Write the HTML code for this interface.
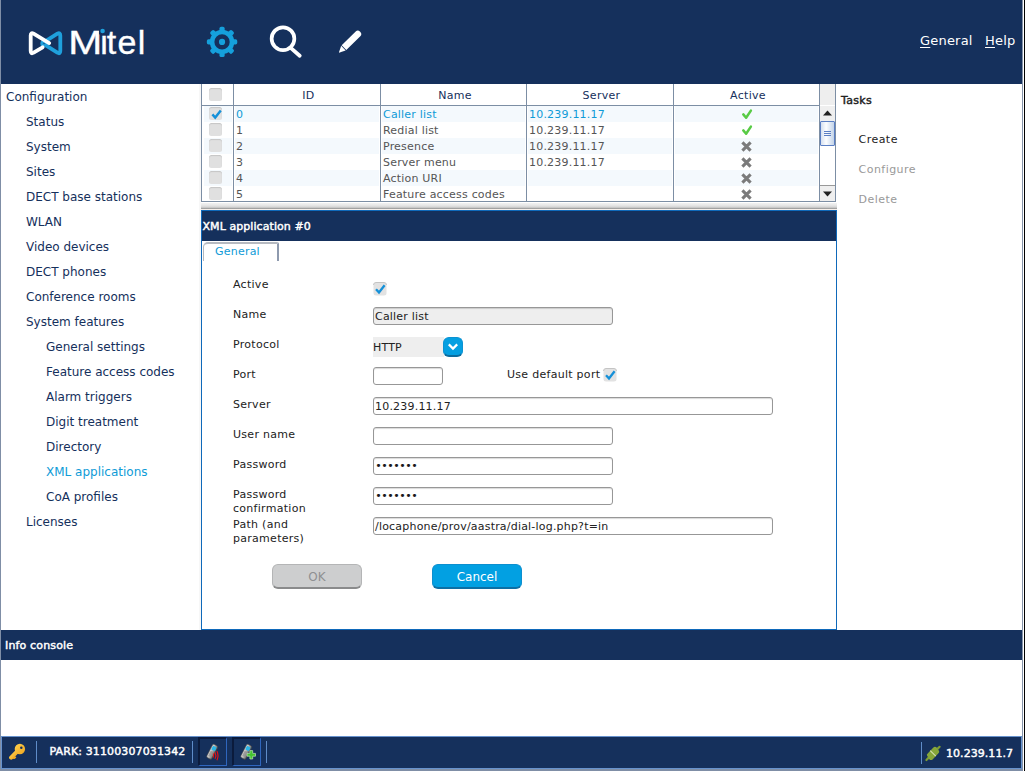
<!DOCTYPE html>
<html><head><meta charset="utf-8"><title>Mitel OMM</title>
<style>
*{box-sizing:border-box;margin:0;padding:0}
html,body{width:1025px;height:771px;overflow:hidden;background:#fff}
body{position:relative;font-family:"DejaVu Sans","Liberation Sans",sans-serif;font-size:11px;color:#15305c}
.abs{position:absolute}
.fb{-webkit-text-stroke:0.45px currentColor}
#hdr{left:1px;top:0;width:1021px;height:84px;background:#15305c}
#edgeL{left:0;top:0;width:1px;height:771px;background:#7f8ea6}
#edgeR{left:1022px;top:0;width:1px;height:771px;background:#8593a9}
#edgeR2{left:1024px;top:0;width:1px;height:771px;background:#000}
.nav{left:0;font-size:12px;white-space:nowrap;color:#15305c;line-height:14px;letter-spacing:0}
.menu{color:#fff;font-size:13px;top:33px;line-height:16px;letter-spacing:.2px}
.menu u{text-decoration-thickness:1px;text-underline-offset:1.5px}
/* table */
#tbl{left:201px;top:84px;width:635px;height:118px;border:1px solid #7c8ea4;border-top:none;background:#fff;overflow:hidden}
.th{top:0;height:22px;letter-spacing:.3px;padding-left:3px;border-right:1px solid #7c8ea4;border-bottom:1px solid #7c8ea4;text-align:center;line-height:23px;font-size:11px;color:#15305c}
.row{left:1px;width:617px;height:16px}
.row.odd .c{background:#f4f9fd}
.c{position:absolute;top:0;height:16px;line-height:18px;font-size:11px;color:#555;white-space:nowrap;letter-spacing:0.2px;padding-left:1px;overflow:hidden}
.sel .c{color:#0f9bd7}
.vl{position:absolute;top:22px;width:1px;height:96px;background:#7c8ea4}
.cb{position:absolute;width:13px;height:13px;border-radius:2.5px;background:#e0e0e0;box-shadow:inset 0 1px 1px rgba(0,0,0,.12)}
/* form */
#tab{left:1px;top:31px;width:76px;height:19px;border:1px solid #b3b8bf;border-top:2px solid #b6bac1;border-right:2px solid #8e9aae;border-bottom:none;border-radius:5px 2px 0 0;color:#0f9bd7;font-size:11px;line-height:16px;text-align:center;letter-spacing:.2px;background:#fff}
#tab span{position:relative;left:-3px}
.inp.pw{letter-spacing:-.5px;color:#1a1a1a;padding-left:1.3px;line-height:16px}

#panel{left:201px;top:210px;width:636px;height:420px;border:1px solid #0f69ba;background:#fff}
#ptitle{left:0;top:0;width:634px;height:30px;background:#15305c;color:#fff;font-size:11px;line-height:31px}
  .lbl{font-size:11px;color:#222;left:31px;margin-top:1px;line-height:14px;letter-spacing:0.28px;white-space:nowrap}
.inp{height:18px;border:1px solid #979797;border-radius:3px;background:#fff;font-size:11px;line-height:17px;color:#222;padding-left:1px;white-space:nowrap;letter-spacing:0.2px;box-shadow:inset 0 1px 1px rgba(0,0,0,.15)}
.btn{top:354px;width:90px;height:25px;border-radius:6px;font-size:12px;text-align:center;line-height:24px}
#bar2{left:1px;top:630px;width:1021px;height:30px;background:#15305c;color:#fff;line-height:32px;font-size:11px;letter-spacing:.15px}
#status{left:1px;top:736px;width:1021px;height:33px;background:#15305c;border:1px solid #6792cd;color:#fff;font-size:11px}
#bot{left:0;top:769px;width:1023px;height:2px;background:#7f8ea6}
.sep{position:absolute;top:4px;width:1px;height:22px;background:#5f8cc8}
.sbtn{position:absolute;top:0px;width:29px;height:29px;border:2px solid;border-right-width:1.5px;border-bottom-width:1.5px;border-color:#0b1b3c #2f66be #2f66be #0b1b3c}
</style></head><body>
<div class="abs" id="hdr"></div>
<div class="abs" id="edgeL"></div><div class="abs" id="edgeR"></div><div class="abs" id="edgeR2"></div>

<!-- logo -->
<svg class="abs" style="left:20px;top:20px" width="140" height="45" viewBox="20 20 140 45">
 <g fill="none" stroke-width="3.8" stroke-linejoin="round" stroke-linecap="round">
  <path d="M46.2 45.6 L57.4 52.7 Q60.3 54.3 60.3 51 L60.3 35.4 Q60.3 32.1 57.4 33.7 L45.2 41.4" stroke="#1fa0dc"/>
  <circle cx="44.1" cy="43.5" r="2.2" stroke="#1fa0dc" stroke-width="3.1"/>
  <path d="M49.2 43.1 L33.6 33.7 Q30.7 32.1 30.7 35.4 L30.7 51 Q30.7 54.3 33.6 52.7 L42.6 47.3" stroke="#fff"/>
 </g>
 <defs><clipPath id="cm"><rect x="60" y="20" width="40.3" height="45"/></clipPath><clipPath id="ci"><rect x="100.3" y="20" width="60" height="45"/></clipPath></defs>
 <g clip-path="url(#cm)"><text transform="translate(68.3,53.6) scale(1.2,1)" font-family="Liberation Sans, sans-serif" font-size="34" fill="#fff" stroke="#fff" stroke-width="0.35">Mitel</text></g>
 <g clip-path="url(#ci)"><text y="53.6" x="60 100.2 106.8 117.4 137.8" font-family="Liberation Sans, sans-serif" font-size="34" fill="#fff" stroke="#fff" stroke-width="0.35">Mitel</text></g>
 <rect x="99" y="27" width="8" height="7.4" fill="#15305c"/>
 <circle cx="102.6" cy="31" r="2.3" fill="#1fa0dc"/>
</svg>

<!-- gear -->
<svg class="abs" style="left:200px;top:20px" width="45" height="45" viewBox="200 20 45 45">
 <g transform="translate(222.05,41.9)"><g fill="#15a0dc"><rect x="-2.6" y="-15.2" width="5.2" height="6" rx="1.7" transform="rotate(0)"/><rect x="-2.6" y="-15.2" width="5.2" height="6" rx="1.7" transform="rotate(45)"/><rect x="-2.6" y="-15.2" width="5.2" height="6" rx="1.7" transform="rotate(90)"/><rect x="-2.6" y="-15.2" width="5.2" height="6" rx="1.7" transform="rotate(135)"/><rect x="-2.6" y="-15.2" width="5.2" height="6" rx="1.7" transform="rotate(180)"/><rect x="-2.6" y="-15.2" width="5.2" height="6" rx="1.7" transform="rotate(225)"/><rect x="-2.6" y="-15.2" width="5.2" height="6" rx="1.7" transform="rotate(270)"/><rect x="-2.6" y="-15.2" width="5.2" height="6" rx="1.7" transform="rotate(315)"/><circle r="3.1"/></g>
 <circle r="9.95" fill="none" stroke="#15a0dc" stroke-width="4.6"/></g>
</svg>
<!-- search -->
<svg class="abs" style="left:262px;top:18px" width="48" height="48" viewBox="262 18 48 48">
 <circle cx="283" cy="38.7" r="11.35" fill="none" stroke="#fff" stroke-width="3.7"/>
 <path d="M291 48.1 L299.7 55.7" stroke="#fff" stroke-width="3.8" stroke-linecap="round"/>
</svg>
<!-- pencil -->
<svg class="abs" style="left:325px;top:20px" width="50" height="45" viewBox="325 20 50 45">
 <g transform="translate(344,47.6) rotate(-44.4)" fill="#fff">
  <path d="M0 -3.3 H19.6 Q22.6 -3.3 22.6 0 Q22.6 3.3 19.6 3.3 H0 Z"/>
  <path d="M-0.8 -3.2 L-0.8 3.2 L-7.3 0 Z"/>
 </g>
</svg>

<div class="abs menu" style="left:920px"><u>G</u>eneral</div>
<div class="abs menu" style="left:985px"><u>H</u>elp</div>

<!-- sidebar -->
<div class="abs nav" style="left:6px;top:90px">Configuration</div>
<div class="abs nav" style="left:26px;top:115px">Status</div>
<div class="abs nav" style="left:26px;top:140px">System</div>
<div class="abs nav" style="left:26px;top:165px">Sites</div>
<div class="abs nav" style="left:26px;top:190px">DECT base stations</div>
<div class="abs nav" style="left:26px;top:215px">WLAN</div>
<div class="abs nav" style="left:26px;top:240px">Video devices</div>
<div class="abs nav" style="left:26px;top:265px">DECT phones</div>
<div class="abs nav" style="left:26px;top:290px">Conference rooms</div>
<div class="abs nav" style="left:26px;top:315px">System features</div>
<div class="abs nav" style="left:46px;top:340px">General settings</div>
<div class="abs nav" style="left:46px;top:365px">Feature access codes</div>
<div class="abs nav" style="left:46px;top:390px">Alarm triggers</div>
<div class="abs nav" style="left:46px;top:415px">Digit treatment</div>
<div class="abs nav" style="left:46px;top:440px">Directory</div>
<div class="abs nav" style="left:46px;top:465px;color:#0f9bd7">XML applications</div>
<div class="abs nav" style="left:46px;top:490px">CoA profiles</div>
<div class="abs nav" style="left:26px;top:515px">Licenses</div>
<div class="abs" style="left:199px;top:84px;width:2px;height:546px;background:#f7f7f7"></div>

<!-- TABLE -->
<div class="abs" id="tbl">
 <div class="abs th" style="left:0;width:32px"><span class="cb" style="left:7px;top:4px"></span></div>
 <div class="abs th" style="left:32px;width:147px">ID</div>
 <div class="abs th" style="left:179px;width:146px">Name</div>
 <div class="abs th" style="left:325px;width:147px">Server</div>
 <div class="abs th" style="left:472px;width:146px">Active</div>
 <div class="abs" style="left:618px;top:0;width:15px;height:21px;background:#eee"></div>
 <!-- rows inserted -->
 <div class="row abs odd sel" style="top:22px"><div class="c" style="left:1px;width:28px"><span class="cb" style="left:5px;top:1px"></span><svg class="abs" style="left:5.5px;top:2px" width="13" height="13" viewBox="0 0 13 13"><path d="M2.4 6.4 L5.2 9.6 L10.8 2.4" fill="none" stroke="#1590d8" stroke-width="2.4" stroke-linejoin="miter"/></svg></div><div class="c" style="left:32px;width:144px">0</div><div class="c" style="left:179px;width:143px">Caller list</div><div class="c" style="left:325px;width:144px">10.239.11.17</div><div class="c" style="left:472px;width:143px"><svg class="abs" style="left:66px;top:2px" width="13" height="13" viewBox="0 0 13 13"><path d="M2.3 6.4 L5.1 9.8 L9.9 2.6" fill="none" stroke="#58cb45" stroke-width="2.5" stroke-linejoin="round" stroke-linecap="round"/></svg></div></div>
<div class="row abs" style="top:38px"><div class="c" style="left:1px;width:28px"><span class="cb" style="left:5px;top:1px"></span></div><div class="c" style="left:32px;width:144px">1</div><div class="c" style="left:179px;width:143px">Redial list</div><div class="c" style="left:325px;width:144px">10.239.11.17</div><div class="c" style="left:472px;width:143px"><svg class="abs" style="left:66px;top:2px" width="13" height="13" viewBox="0 0 13 13"><path d="M2.3 6.4 L5.1 9.8 L9.9 2.6" fill="none" stroke="#58cb45" stroke-width="2.5" stroke-linejoin="round" stroke-linecap="round"/></svg></div></div>
<div class="row abs odd" style="top:54px"><div class="c" style="left:1px;width:28px"><span class="cb" style="left:5px;top:1px"></span></div><div class="c" style="left:32px;width:144px">2</div><div class="c" style="left:179px;width:143px">Presence</div><div class="c" style="left:325px;width:144px">10.239.11.17</div><div class="c" style="left:472px;width:143px"><svg class="abs" style="left:66.3px;top:2.5px" width="11" height="11" viewBox="0 0 11 11"><path d="M1.4 1.4 L9.6 9.6 M9.6 1.4 L1.4 9.6" fill="none" stroke="#7b7b7b" stroke-width="3.1"/></svg></div></div>
<div class="row abs" style="top:70px"><div class="c" style="left:1px;width:28px"><span class="cb" style="left:5px;top:1px"></span></div><div class="c" style="left:32px;width:144px">3</div><div class="c" style="left:179px;width:143px">Server menu</div><div class="c" style="left:325px;width:144px">10.239.11.17</div><div class="c" style="left:472px;width:143px"><svg class="abs" style="left:66.3px;top:2.5px" width="11" height="11" viewBox="0 0 11 11"><path d="M1.4 1.4 L9.6 9.6 M9.6 1.4 L1.4 9.6" fill="none" stroke="#7b7b7b" stroke-width="3.1"/></svg></div></div>
<div class="row abs odd" style="top:86px"><div class="c" style="left:1px;width:28px"><span class="cb" style="left:5px;top:1px"></span></div><div class="c" style="left:32px;width:144px">4</div><div class="c" style="left:179px;width:143px">Action URI</div><div class="c" style="left:325px;width:144px"></div><div class="c" style="left:472px;width:143px"><svg class="abs" style="left:66.3px;top:2.5px" width="11" height="11" viewBox="0 0 11 11"><path d="M1.4 1.4 L9.6 9.6 M9.6 1.4 L1.4 9.6" fill="none" stroke="#7b7b7b" stroke-width="3.1"/></svg></div></div>
<div class="row abs" style="top:102px"><div class="c" style="left:1px;width:28px"><span class="cb" style="left:5px;top:1px"></span></div><div class="c" style="left:32px;width:144px">5</div><div class="c" style="left:179px;width:143px">Feature access codes</div><div class="c" style="left:325px;width:144px"></div><div class="c" style="left:472px;width:143px"><svg class="abs" style="left:66.3px;top:2.5px" width="11" height="11" viewBox="0 0 11 11"><path d="M1.4 1.4 L9.6 9.6 M9.6 1.4 L1.4 9.6" fill="none" stroke="#7b7b7b" stroke-width="3.1"/></svg></div></div>
<div class="vl" style="left:31px"></div><div class="vl" style="left:178px"></div><div class="vl" style="left:324px"></div><div class="vl" style="left:471px"></div><div class="vl" style="left:617px"></div>
<div class="abs" style="left:618px;top:22px;width:15px;height:96px;background:#fff"></div>
<div class="abs" style="left:618px;top:22px;width:15px;height:15px;background:#efefef"><svg class="abs" style="left:3px;top:4px" width="9" height="6"><path d="M0 5.5 L4.5 0.5 L9 5.5Z" fill="#222"/></svg></div>
<div class="abs" style="left:618px;top:37px;width:15px;height:25px;border:1px solid #5b7fc4;border-radius:1px;background:linear-gradient(90deg,#d5e0f0,#fdfeff 40%,#dfe8f4 70%,#c3d3e8)"><div class="abs" style="left:3px;top:9px;width:7px;height:1px;background:#5b7fc4;box-shadow:0 2px 0 #5b7fc4,0 4px 0 #5b7fc4"></div></div>
<div class="abs" style="left:618px;top:101px;width:15px;height:16px;background:#efefef;border-top:1px solid #999"><svg class="abs" style="left:3px;top:5px" width="9" height="6"><path d="M0 0.5 L4.5 5.5 L9 0.5Z" fill="#222"/></svg></div>

</div>

<!-- splitter -->
<div class="abs" style="left:201px;top:203px;width:636px;height:6px;background:linear-gradient(#f1f1f1,#e8e8e8 35%,#d4d4d4 70%,#9a9a9a 95%,#8f8f8f)"></div>
<div class="abs" style="left:201px;top:209px;width:636px;height:1px;background:#f6efea"></div>

<!-- PANEL -->
<div class="abs" id="panel">
 <div class="abs fb" id="ptitle"><span style="padding-left:.5px;letter-spacing:.07px">XML application #0</span></div>
 <div class="abs" id="tab"><span>General</span></div>
 <div class="abs lbl" style="top:66px">Active</div>
 <svg class="abs" style="left:171px;top:71px" width="14" height="14" viewBox="0 0 14 14"><rect x="0.5" y="0.5" width="13" height="13" rx="2.5" fill="#e2e2e2"/><path d="M0.5 3 Q0.5 0.5 3 0.5 L11 0.5 Q13.5 0.5 13.5 3" fill="none" stroke="#c4c4c4" stroke-width="1"/><path d="M3 7.2 L6 10.4 L11.6 3.2" fill="none" stroke="#1590d8" stroke-width="2.3"/></svg>
 <div class="abs lbl" style="top:96px">Name</div>
 <div class="abs inp" style="left:171px;top:96px;width:240px;background:#eee">Caller list</div>
 <div class="abs lbl" style="top:126px">Protocol</div>
 <div class="abs" style="left:171px;top:126px;width:71px;height:20px;background:#eee;font-size:11px;line-height:21px;color:#222;letter-spacing:.2px">HTTP</div>
 <div class="abs" style="left:241px;top:126px;width:20px;height:20px;border-radius:6px;background:#049fe1;border:1px solid #0c92d2;border-bottom:2px solid #0b6c9e"><svg class="abs" style="left:3px;top:5px" width="12" height="8" viewBox="0 0 12 8"><path d="M1.8 1.4 L6 5.6 L10.2 1.4" fill="none" stroke="#fff" stroke-width="2.2"/></svg></div>
 <div class="abs lbl" style="top:156px">Port</div>
 <div class="abs inp" style="left:171px;top:156px;width:70px"></div>
 <div class="abs lbl" style="left:305px;top:156px">Use default port</div>
 <svg class="abs" style="left:401px;top:157px" width="14" height="14" viewBox="0 0 14 14"><rect x="0.5" y="0.5" width="13" height="13" rx="2.5" fill="#e2e2e2"/><path d="M0.5 3 Q0.5 0.5 3 0.5 L11 0.5 Q13.5 0.5 13.5 3" fill="none" stroke="#c4c4c4" stroke-width="1"/><path d="M3 7.2 L6 10.4 L11.6 3.2" fill="none" stroke="#1590d8" stroke-width="2.3"/></svg>
 <div class="abs lbl" style="top:186px">Server</div>
 <div class="abs inp" style="left:171px;top:186px;width:400px">10.239.11.17</div>
 <div class="abs lbl" style="top:216px">User name</div>
 <div class="abs inp" style="left:171px;top:216px;width:240px"></div>
 <div class="abs lbl" style="top:246px">Password</div>
 <div class="abs inp pw" style="left:171px;top:246px;width:240px">•••••••</div>
 <div class="abs lbl" style="top:276px">Password<br>confirmation</div>
 <div class="abs inp pw" style="left:171px;top:276px;width:240px">•••••••</div>
 <div class="abs lbl" style="top:306px">Path (and<br>parameters)</div>
 <div class="abs inp" style="left:171px;top:306px;width:400px">/locaphone/prov/aastra/dial-log.php?t=in</div>
 <div class="abs btn" style="left:70px;top:353px;background:#cdcecf;border:1px solid #b4b5b6;border-bottom:2px solid #8a8b8c;color:#8f9092">OK</div>
 <div class="abs btn" style="left:230px;top:353px;background:#02a0e2;border:1px solid #0d8fcf;border-bottom:2px solid #0c6fa4;color:#fff">Cancel</div>

</div>

<!-- tasks -->
<div class="abs fb" style="left:841px;top:94px;font-size:11px;color:#222;line-height:14px;letter-spacing:.3px">Tasks</div>
<div class="abs" style="left:858.6px;top:133px;font-size:11px;color:#222;line-height:14px;letter-spacing:.45px">Create</div>
<div class="abs" style="left:858.6px;top:163px;font-size:11px;color:#999;line-height:14px;letter-spacing:.45px">Configure</div>
<div class="abs" style="left:858.6px;top:193px;font-size:11px;color:#999;line-height:14px;letter-spacing:.45px">Delete</div>

<!-- info console -->
<div class="abs fb" id="bar2"><span style="padding-left:4px">Info console</span></div>
<div class="abs" id="status">
 <svg width="0" height="0" style="position:absolute"><defs><linearGradient id="pg" x1="0" x2="1"><stop offset="0" stop-color="#e4e4e4"/><stop offset=".55" stop-color="#a9a9a9"/><stop offset="1" stop-color="#5a5a5a"/></linearGradient>
 <linearGradient id="kg" x1="0" y1="0" x2="1" y2="1"><stop offset="0" stop-color="#ffd24f"/><stop offset="1" stop-color="#eda41f"/></linearGradient></defs></svg>
 <svg class="abs" style="left:7px;top:6px" width="18" height="18" viewBox="9 743 18 18">
  <path d="M11.2 757.6 L18.2 750.4" stroke="url(#kg)" stroke-width="4.2" stroke-linecap="round"/>
  <path d="M12.2 758.8 L15 756 L16.4 757.4 L14.6 759 Z" fill="#f0aa24"/>
  <circle cx="19.9" cy="749" r="5.2" fill="url(#kg)"/>
  <circle cx="21.3" cy="747.7" r="1.25" fill="#15305c"/>
 </svg>
 <div class="sep" style="left:34px"></div>
 <div class="abs fb" style="left:47.5px;top:7.6px;line-height:14px;white-space:nowrap;letter-spacing:.12px">PARK: 31100307031342</div>
 <div class="sep" style="left:190px"></div>
 <div class="sbtn" style="left:196px"><svg class="abs" style="left:4.5px;top:4px" width="18" height="18" viewBox="0 0 18 18"><g transform="rotate(27 7 9)"><rect x="4.2" y="1.2" width="5.8" height="15" rx="1.6" fill="url(#pg)" stroke="#4a4a4a" stroke-width=".6"/><rect x="5.1" y="2.8" width="4" height="4.2" rx=".6" fill="#2ab4e6"/><rect x="5.2" y="8.4" width="3.8" height="5.6" fill="#8d8d8d" opacity=".7"/></g>
  <g fill="none" stroke="#f01010" stroke-width="1.1"><path d="M8.2 10.6 q1 2 0 4"/><path d="M10 9.2 q1.7 3.3 0 6.6"/><path d="M11.9 8 q2.2 4.6 0 9.2"/></g></svg></div>
 <div class="sbtn" style="left:230px"><svg class="abs" style="left:4.5px;top:4px" width="18" height="18" viewBox="0 0 18 18"><g transform="rotate(27 7 9)"><rect x="4.2" y="1.2" width="5.8" height="15" rx="1.6" fill="url(#pg)" stroke="#4a4a4a" stroke-width=".6"/><rect x="5.1" y="2.8" width="4" height="4.2" rx=".6" fill="#2ab4e6"/><rect x="5.2" y="8.4" width="3.8" height="5.6" fill="#8d8d8d" opacity=".7"/></g>
  <path d="M10.9 7.6 h2.8 v2.8 h2.8 v2.8 h-2.8 v2.8 h-2.8 v-2.8 h-2.8 v-2.8 h2.8z" fill="#43c52f" stroke="#bfe6b6" stroke-width=".7"/></svg></div>
 <div class="sep" style="left:264px"></div>
 <div class="sep" style="left:919px;top:5px"></div>
 <svg class="abs" style="left:922px;top:7.5px" width="18" height="18" viewBox="924 744 18 18">
  <g stroke-linecap="round"><path d="M926.4 759 L930 755.4" stroke="#7d9c33" stroke-width="2.2"/><path d="M936 749.4 L939.6 745.8" stroke="#7d9c33" stroke-width="2.2"/></g>
  <path d="M929.2 756.2 L936.8 748.6" stroke="#86a63a" stroke-width="7" stroke-linecap="butt"/>
  <path d="M931 756.4 L936.6 750.6" stroke="#86a63a" stroke-width="5" stroke-linecap="round"/>
  <path d="M929.6 754.2 L935 748.4" stroke="#86a63a" stroke-width="5" stroke-linecap="round"/>
  <path d="M930.2 749.6 L935.8 755.2" stroke="#d3e0b0" stroke-width="1.1"/>
 </svg>
 <div class="abs fb" style="left:944px;top:10px;line-height:14px;white-space:nowrap;letter-spacing:.05px">10.239.11.7</div>
</div>
<div class="abs" id="bot"></div>
</body></html>
